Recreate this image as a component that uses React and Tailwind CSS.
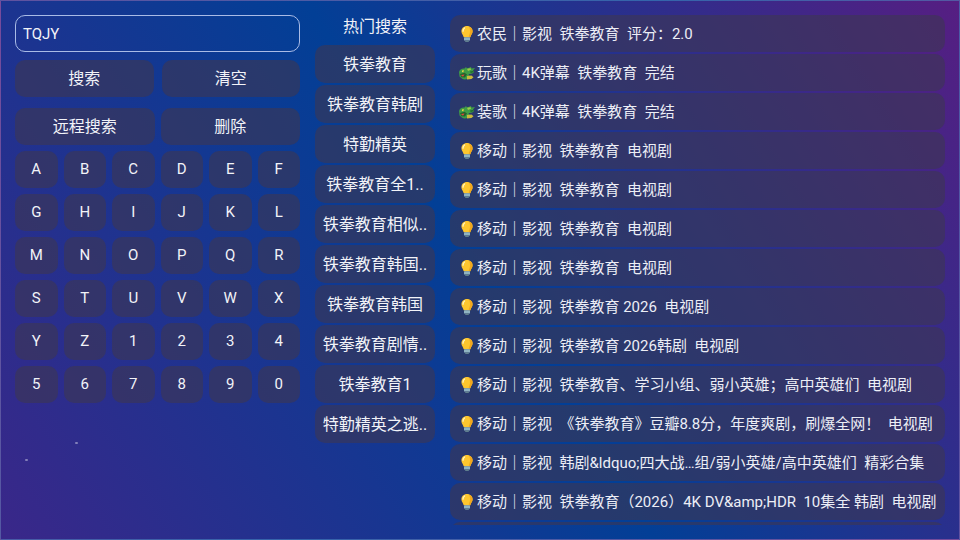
import React from "react";

const KEYS = "ABCDEFGHIJKLMNOPQRSTUVWXYZ1234567890".split("");

const HOT = [
  "铁拳教育",
  "铁拳教育韩剧",
  "特勤精英",
  "铁拳教育全1..",
  "铁拳教育相似..",
  "铁拳教育韩国..",
  "铁拳教育韩国",
  "铁拳教育剧情..",
  "铁拳教育1",
  "特勤精英之逃..",
];

const RESULTS = [
  ["bulb", "农民｜影视  铁拳教育  评分：2.0"],
  ["dragon", "玩歌｜4K弹幕  铁拳教育  完结"],
  ["dragon", "装歌｜4K弹幕  铁拳教育  完结"],
  ["bulb", "移动｜影视  铁拳教育  电视剧"],
  ["bulb", "移动｜影视  铁拳教育  电视剧"],
  ["bulb", "移动｜影视  铁拳教育  电视剧"],
  ["bulb", "移动｜影视  铁拳教育  电视剧"],
  ["bulb", "移动｜影视  铁拳教育 2026  电视剧"],
  ["bulb", "移动｜影视  铁拳教育 2026韩剧  电视剧"],
  ["bulb", "移动｜影视  铁拳教育、学习小组、弱小英雄；高中英雄们  电视剧"],
  ["bulb", "移动｜影视  《铁拳教育》豆瓣8.8分，年度爽剧，刷爆全网！  电视剧"],
  ["bulb", "移动｜影视  韩剧&ldquo;四大战…组/弱小英雄/高中英雄们  精彩合集"],
  ["bulb", "移动｜影视  铁拳教育（2026）4K DV&amp;HDR  10集全 韩剧  电视剧"],
  ["bulb", ""],
];

function Bulb() {
  return (
    <svg width="18" height="18" viewBox="0 0 18 18" className="shrink-0">
      <path d="M9 1C5.8 1 3.4 3.3 3.4 6.3c0 2.5 1.8 3.6 2.3 6h6.6c.5-2.4 2.3-3.5 2.3-6C14.6 3.3 12.2 1 9 1z" fill="#fdc62e" />
      <path d="M11 1.6c2 .8 3.6 2.4 3.6 4.7 0 2.5-1.8 3.6-2.3 6h-1.6c.4-3 2.8-5 .3-10.7z" fill="#f2a81d" />
      <path d="M6.6 3C5.5 3.8 4.9 5 5 6.2" stroke="#fff6c4" strokeWidth="1.3" strokeLinecap="round" fill="none" />
      <rect x="6" y="12.3" width="6" height="3.2" rx="0.6" fill="#8fb4c2" />
      <rect x="7" y="15.4" width="4" height="1.6" rx="0.8" fill="#5f7f8e" />
    </svg>
  );
}

function Dragon() {
  return (
    <svg width="18" height="15" viewBox="0 0 18 15" className="shrink-0">
      <path d="M1 6c.6-2.500 3-4 5.500-3.500L8 1l1 1.500L13 1l.5 1.500L17 2l-2 2.500 1 1.500c-1.500 2-4 2-5.500 2l1.500 2.500c-1 2.500-5 3.500-7.500 2.500L1.500 10.500z" fill="#3f9c46" />
      <path d="M9 2.800l3.500-.6.5 1.500-3 1.300z" fill="#9ccc4a" />
      <path d="M2 8l4.500-1.200L9 8.500l-2 3-3.500-.2z" fill="#23632c" />
      <path d="M2.800 9l3.700-.4-1.500 2.200z" fill="#e8443a" />
      <circle cx="5" cy="5.300" r="1" fill="#ffe94a" />
      <circle cx="5.200" cy="5.300" r="0.4" fill="#1b3a1e" />
      <path d="M9 10l4.500-.5 2 1.800-2 1.700-4.500.4z" fill="#c9ba3c" />
      <path d="M12 5.500l3-.5.800 1-3 1z" fill="#1f6b2c" />
    </svg>
  );
}

function Tile({ className = "", children }) {
  return (
    <div className={`flex items-center justify-center rounded-[10px] bg-[#3e3752]/60 text-[#f2f3f8] ${className}`}>
      {children}
    </div>
  );
}

export default function App() {
  return (
    <div className="relative h-[540px] w-[960px] overflow-hidden border border-white/20 bg-[linear-gradient(57deg,#3a2789_0%,#023f96_50%,#561e82_100%)] font-[Roboto,'Noto_Sans_CJK_SC',sans-serif] text-[#f2f3f8]">
      <div className="flex h-full items-start pl-[14px] pt-[14px]">
        {/* left: input, buttons, keyboard */}
        <div className="w-[285px] shrink-0">
          <div className="flex h-[37px] items-center rounded-[10px] border border-[#a9bbe6] px-[7px] pt-px text-[15px]">TQJY</div>
          <div className="mt-2 flex gap-2">
            <Tile className="h-[37px] flex-1 text-base">搜索</Tile>
            <Tile className="h-[37px] flex-1 text-base">清空</Tile>
          </div>
          <div className="mt-[11px] flex gap-[6px]">
            <Tile className="h-[37px] flex-1 text-base">远程搜索</Tile>
            <Tile className="h-[37px] flex-1 text-base">删除</Tile>
          </div>
          <div className="mt-[6px] grid grid-cols-6 gap-[6px]">
            {KEYS.map((k) => (
              <Tile key={k} className="h-[37px] text-[15px]">
                {k}
              </Tile>
            ))}
          </div>
        </div>

        {/* middle: hot searches */}
        <div className="ml-[15px] w-[120px] shrink-0">
          <div className="flex h-[24px] items-center justify-center text-base">热门搜索</div>
          <div className="mt-[6px] flex flex-col gap-[2px]">
            {HOT.map((h, i) => (
              <Tile key={i} className="h-[38px] whitespace-nowrap pt-px text-base">
                {h}
              </Tile>
            ))}
          </div>
        </div>

        {/* right: results */}
        <div className="ml-[15px] flex h-[510px] w-[495px] shrink-0 flex-col gap-[2px] overflow-hidden">
          {RESULTS.map(([icon, text], i) => (
            <div key={i} className="flex h-[37px] shrink-0 items-center rounded-[10px] bg-[#3e3752]/60 pl-[8px] pt-px text-[15px] whitespace-pre text-[#eceef6]">
              {icon === "bulb" ? <Bulb /> : <Dragon />}
              <span className="ml-px">{text}</span>
            </div>
          ))}
        </div>
      </div>

      {/* stray specks in the backdrop */}
      <div className="absolute left-[74px] top-[441px] h-[2px] w-[3px] rounded-full bg-white/40" />
      <div className="absolute left-[24px] top-[458px] h-[2px] w-[3px] rounded-full bg-white/40" />
    </div>
  );
}
